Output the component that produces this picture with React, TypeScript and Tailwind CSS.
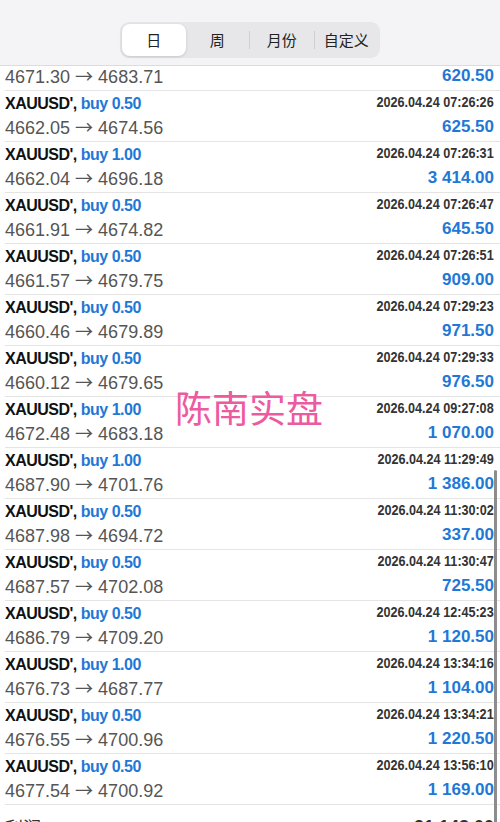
import React from 'react';

type Deal = { lot: string; time: string; open: string; close: string; profit: string };

const deals: Deal[] = [
    { lot: '0.50', time: '2026.04.24 07:26:26', open: '4662.05', close: '4674.56', profit: '625.50' },
    { lot: '1.00', time: '2026.04.24 07:26:31', open: '4662.04', close: '4696.18', profit: '3 414.00' },
    { lot: '0.50', time: '2026.04.24 07:26:47', open: '4661.91', close: '4674.82', profit: '645.50' },
    { lot: '0.50', time: '2026.04.24 07:26:51', open: '4661.57', close: '4679.75', profit: '909.00' },
    { lot: '0.50', time: '2026.04.24 07:29:23', open: '4660.46', close: '4679.89', profit: '971.50' },
    { lot: '0.50', time: '2026.04.24 07:29:33', open: '4660.12', close: '4679.65', profit: '976.50' },
    { lot: '1.00', time: '2026.04.24 09:27:08', open: '4672.48', close: '4683.18', profit: '1 070.00' },
    { lot: '1.00', time: '2026.04.24 11:29:49', open: '4687.90', close: '4701.76', profit: '1 386.00' },
    { lot: '0.50', time: '2026.04.24 11:30:02', open: '4687.98', close: '4694.72', profit: '337.00' },
    { lot: '0.50', time: '2026.04.24 11:30:47', open: '4687.57', close: '4702.08', profit: '725.50' },
    { lot: '0.50', time: '2026.04.24 12:45:23', open: '4686.79', close: '4709.20', profit: '1 120.50' },
    { lot: '1.00', time: '2026.04.24 13:34:16', open: '4676.73', close: '4687.77', profit: '1 104.00' },
    { lot: '0.50', time: '2026.04.24 13:34:21', open: '4676.55', close: '4700.96', profit: '1 220.50' },
    { lot: '0.50', time: '2026.04.24 13:56:10', open: '4677.54', close: '4700.92', profit: '1 169.00' },
];

const tabs = ['日', '周', '月份', '自定义'];

function PriceLine({ open, close, profit }: { open: string; close: string; profit: string }) {
    return (
        <div className="h-[20px] flex items-center justify-between">
            <span className="text-[18px] text-[#555]">
                {open} <span className="font-['Noto_Sans_CJK_SC',sans-serif]">→</span> {close}
            </span>
            <span className="text-[17px] font-bold text-[#1f78d6]">{profit}</span>
        </div>
    );
}

function DealRow({ deal }: { deal: Deal }) {
    return (
        <div className="ml-[5px] pr-[6px] border-b border-[#e4e4e4]">
            <div className="h-[50px] flex flex-col">
                <div className="h-[26px] flex items-center justify-between">
                    <span className="text-[16px] font-bold tracking-[-0.5px]">
                        <span className="text-[#111]">XAUUSD',</span>{' '}
                        <span className="text-[#1f78d6]">buy {deal.lot}</span>
                    </span>
                    <span className="block pb-[3px] text-[14.5px] font-bold text-[#333] origin-right [transform:scaleX(0.87)]">{deal.time}</span>
                </div>
                <PriceLine open={deal.open} close={deal.close} profit={deal.profit} />
            </div>
        </div>
    );
}

export default function App() {
    return (
        <div className="relative h-[822px] overflow-hidden bg-white font-['Liberation_Sans','Noto_Sans_CJK_SC',sans-serif]">
            <div className="h-[66px] bg-[#f4f4f6] border-b border-[#dcdcdc] flex justify-center pt-[22px]">
                <div className="w-[260px] h-[36px] rounded-[9px] bg-[#e7e7ea] p-[2px] flex items-center font-['Noto_Sans_CJK_SC',sans-serif] text-[15px] text-[#222]">
                    {tabs.map((t, i) => (
                        <React.Fragment key={t}>
                            {i >= 2 && <div className="w-px h-[18px] bg-[#cfcfd3]" />}
                            <div className={i === 0
                                ? 'flex-1 h-full rounded-[8px] bg-white shadow-[0_1px_3px_rgba(0,0,0,0.15)] flex items-center justify-center'
                                : 'flex-1 h-full flex items-center justify-center'}>
                                {t}
                            </div>
                        </React.Fragment>
                    ))}
                </div>
            </div>

            <div className="ml-[5px] pr-[6px] border-b border-[#e4e4e4]">
                <div className="h-[24px] flex flex-col justify-start">
                    <PriceLine open="4671.30" close="4683.71" profit="620.50" />
                </div>
            </div>

            {deals.map((d) => (
                <DealRow key={d.time} deal={d} />
            ))}

            <div className="ml-[5px] pr-[6px] pt-[9px] flex items-center justify-between text-[18px] text-[#333]">
                <span className="font-['Noto_Sans_CJK_SC',sans-serif]">利润:</span>
                <span className="font-bold">21 143.00</span>
            </div>

            <div className="absolute left-[175px] top-[389px] text-[37px] leading-none text-[#ec5a9f] font-['Noto_Sans_CJK_SC',sans-serif]">
                陈南实盘
            </div>
            <div className="absolute right-[3px] top-[470px] w-[3px] h-[360px] rounded-full bg-[#8c8c8c]" />
        </div>
    );
}
